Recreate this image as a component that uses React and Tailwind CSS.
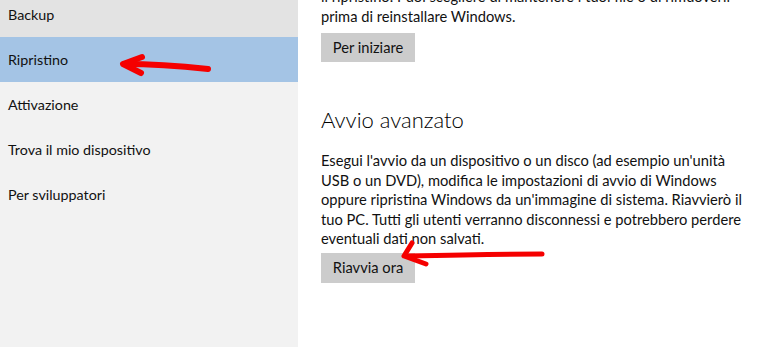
import React from 'react';

const menu = ['Backup', 'Ripristino', 'Attivazione', 'Trova il mio dispositivo', 'Per sviluppatori'];

const RedArrows = () => (
  <svg className="absolute inset-0 pointer-events-none" width="768" height="347" viewBox="0 0 768 347">
    <g fill="none" stroke="#f50000" strokeLinecap="round" strokeLinejoin="round">
      <path d="M208 69 C180 66 150 64 124 64" strokeWidth="6" />
      <path d="M142 57 L123 64 L141 73" strokeWidth="6" />
      <path d="M542 254 C500 254 450 255 406 256" strokeWidth="5" />
      <path d="M412 243 L404 256 L426 264" strokeWidth="5" />
    </g>
  </svg>
);

const App = () => {
  return (
    <div
      className="relative w-[768px] h-[347px] overflow-hidden flex bg-white text-black"
      style={{ fontFamily: 'Lato, "Noto Sans", sans-serif' }}
    >
      <aside className="w-[298px] shrink-0 bg-[#f2f2f2] flex flex-col">
        <div className="-mt-[8px]">
          {menu.map((item, i) => (
            <div
              key={item}
              className={`h-[45px] flex items-center pl-2 text-[14.3px] text-[#111] ${
                i === 0 ? 'bg-[#e3e3e3]' : i === 1 ? 'bg-[#a4c4e5]' : ''
              }`}
            >
              {item}
            </div>
          ))}
        </div>
      </aside>

      <main className="flex-1 pl-[23px] pr-4 text-[14.7px] leading-[19.5px] text-[#111] whitespace-nowrap">
        <div className="-mt-[13px]">
          <p>
            il ripristino. Puoi scegliere di mantenere i tuoi file o di rimuoverli
            <br />
            prima di reinstallare Windows.
          </p>
          <button className="mt-[7px] h-[29px] w-[94px] bg-[#cccccc]">Per iniziare</button>

          <h2 className="mt-[44px] text-[22px] font-light leading-[28px] text-black">Avvio avanzato</h2>

          <p className="mt-[17px]">
            Esegui l'avvio da un dispositivo o un disco (ad esempio un'unità
            <br />
            USB o un DVD), modifica le impostazioni di avvio di Windows
            <br />
            oppure ripristina Windows da un'immagine di sistema. Riavvierò il
            <br />
            tuo PC. Tutti gli utenti verranno disconnessi e potrebbero perdere
            <br />
            eventuali dati non salvati.
          </p>
          <button className="mt-[4px] h-[30px] w-[94px] bg-[#cccccc]">Riavvia ora</button>
        </div>
      </main>

      <RedArrows />
    </div>
  );
};

export default App;
